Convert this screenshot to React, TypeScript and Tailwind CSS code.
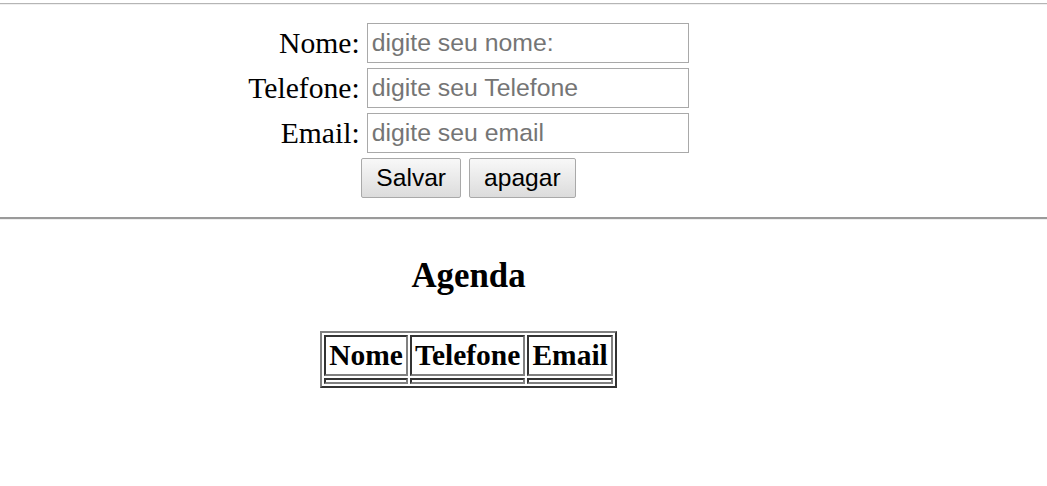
import type { ReactNode } from "react";

const fields = [
  { label: "Nome:", placeholder: "digite seu nome:" },
  { label: "Telefone:", placeholder: "digite seu Telefone" },
  { label: "Email:", placeholder: "digite seu email" },
];

const columns = ["Nome", "Telefone", "Email"];

function Button({ children }: { children: ReactNode }) {
  return (
    <button
      type="button"
      className="h-[40px] rounded-[2px] border border-[#a9a9a9] bg-linear-to-b from-[#f8f8f8] to-[#dcdcdc] px-[14px] font-['Liberation_Sans',Arial,sans-serif] text-[24.6px] leading-[28px] text-black"
    >
      {children}
    </button>
  );
}

export default function App() {
  return (
    <div className="min-h-[486px] w-full bg-white font-['Liberation_Serif','Times_New_Roman',serif] text-[29.6px] text-black">
      <div className="pt-[3px]">
        <div className="h-px bg-[#b5b5b5]" />
        <div className="h-px bg-[#f0f0f0]" />
      </div>

      <div className="w-[937px] pt-[18px]">
        <form className="flex flex-col items-center">
          <div className="grid grid-cols-[auto_auto] gap-x-[7px] gap-y-[5px]">
            {fields.map((f) => (
              <div key={f.label} className="contents">
                <label className="flex h-[40px] items-center justify-end leading-[32px]">
                  {f.label}
                </label>
                <input
                  type="text"
                  placeholder={f.placeholder}
                  className="h-[40px] w-[322px] border border-[#a9a9a9] bg-white px-[4px] font-['Liberation_Sans',Arial,sans-serif] text-[24.8px] text-black outline-none placeholder:text-[#757575]"
                />
              </div>
            ))}
          </div>
          <div className="mt-[5px] flex gap-[8px]">
            <Button>Salvar</Button>
            <Button>apagar</Button>
          </div>
        </form>
      </div>

      <div className="mt-[19px]">
        <div className="h-[2px] bg-[#9a9a9a]" />
        <div className="h-px bg-[#eeeeee]" />
      </div>

      <div className="flex w-[937px] flex-col items-center">
        <h3 className="mt-[37px] text-[34.8px] font-bold leading-[38px]">Agenda</h3>
        <table className="mt-[36px] border-separate border-spacing-[2px] border-2 border-t-[#808080] border-r-[#333333] border-b-[#333333] border-l-[#808080]">
          <thead>
            <tr>
              {columns.map((c) => (
                <th
                  key={c}
                  className="border-2 border-t-[#333333] border-r-[#808080] border-b-[#808080] border-l-[#333333] px-[3px] py-[2px] text-center text-[29.5px] font-bold leading-[33px]"
                >
                  {c}
                </th>
              ))}
            </tr>
          </thead>
          <tbody>
            <tr>
              {columns.map((c) => (
                <td
                  key={c}
                  className="border-2 border-t-[#333333] border-r-[#808080] border-b-[#808080] border-l-[#333333] p-px"
                />
              ))}
            </tr>
          </tbody>
        </table>
      </div>
    </div>
  );
}
